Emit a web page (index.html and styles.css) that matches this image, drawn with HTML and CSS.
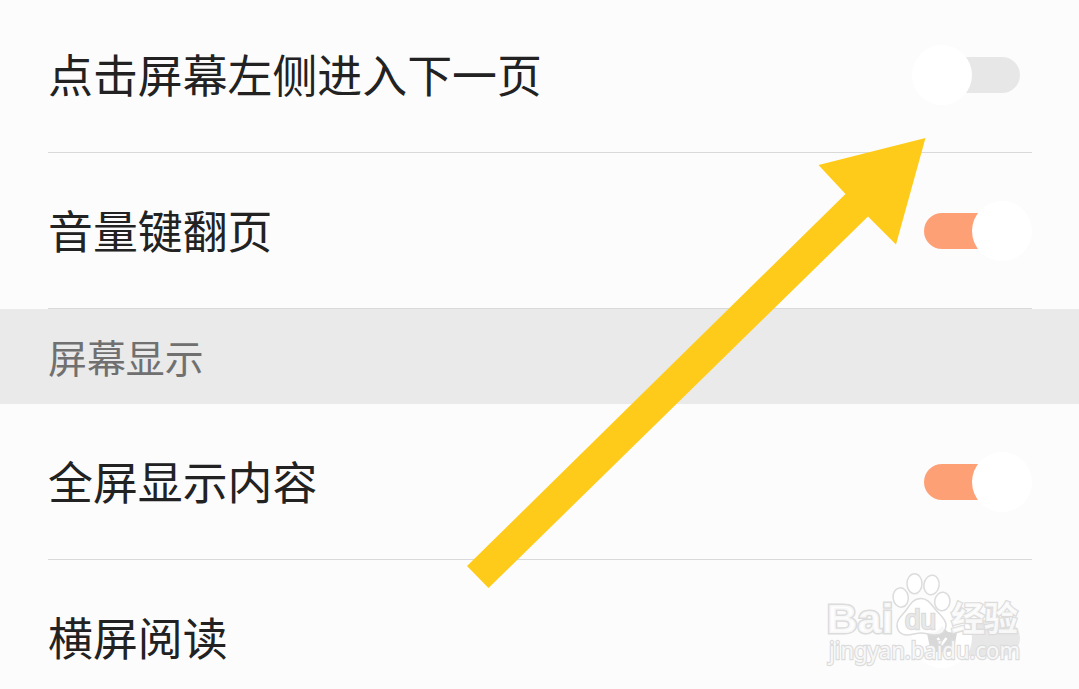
FILE: index.html
```
<!DOCTYPE html>
<html lang="zh-CN">
<head>
<meta charset="utf-8">
<title>阅读设置</title>
<link rel="stylesheet" href="styles.css">
</head>
<body>
<main class="settings">
  <div class="row row-first"><span class="label">点击屏幕左侧进入下一页</span><span class="switch"><i class="knob"></i></span></div>
  <div class="row"><span class="label">音量键翻页</span><span class="switch on"><i class="knob"></i></span></div>
  <h2 class="section">屏幕显示</h2>
  <div class="row"><span class="label">全屏显示内容</span><span class="switch on"><i class="knob"></i></span></div>
  <div class="row"><span class="label">横屏阅读</span><span class="switch"><i class="knob"></i></span></div>
</main>
<svg class="overlay" viewBox="0 0 1079 689">
  <polygon class="arrow" points="467,566 845.5,194 818.5,165 925.5,138 896,244.5 868,216.5 488.5,588"/>
  <g class="shield">
    <path class="shield-body" d="M927 633 L936 632 L942 626 L948 632 L957 633 L954 648 Q952 652 947 652 L937 652 Q932 652 930 648 Z"/>
    <path class="shield-check" d="M937.500 638 L942 644 L946.500 638"/>
  </g>
  <g class="mark">
    <ellipse cx="900.7" cy="597.5" rx="7.6" ry="9.7" transform="rotate(-8 900.7 597.5)"/>
    <ellipse cx="914.5" cy="583.7" rx="7.5" ry="10"/>
    <ellipse cx="931.5" cy="585" rx="7.6" ry="9.8" transform="rotate(10 931.5 585)"/>
    <ellipse cx="942.3" cy="601.5" rx="7.6" ry="9.3" transform="rotate(8 942.3 601.5)"/>
    <path d="M921 598.500 C928 598.500 931 604 935 609 C940 615 946 619 946 625 C946 631 942 635 935 635 C930 635 926 633 921 633 C916 633 912 635 907 635 C901 635 897 631 897 625 C897 618 903 615 907 609 C911 603 914 598.500 921 598.500 Z"/>
    <text class="brand" x="826.500" y="633" textLength="67" lengthAdjust="spacingAndGlyphs">Bai</text>
    <text class="du" x="905" y="628.500" textLength="31" lengthAdjust="spacingAndGlyphs">du</text>
    <text class="brand-cn" x="951" y="631" textLength="67">经验</text>
    <text class="domain" x="829" y="659" textLength="191" lengthAdjust="spacingAndGlyphs">jingyan.baidu.com</text>
  </g>
</svg>
</body>
</html>
```
FILE: styles.css
```
body {
  margin: 0;
  background: #fcfcfc;
  font-family: "Noto Sans CJK SC", sans-serif;
  color: #222;
}
.settings {
  height: 689px;
  overflow: hidden;
}
.row {
  display: flex;
  align-items: center;
  justify-content: space-between;
  box-sizing: border-box;
  height: 156px;
  margin: 0 47px 0 48px;
  border-bottom: 1px solid #d9d9d9;
}
.row-first { margin-top: -3px; }
.label {
  padding-bottom: 2px;
  font-size: 44.9px;
  line-height: 60px;
}
.section {
  margin: 0;
  height: 95px;
  padding-left: 48px;
  background: #eaeaea;
  color: #707070;
  font-size: 38.9px;
  font-weight: 400;
  line-height: 95px;
}
.switch {
  display: flex;
  align-items: center;
  box-sizing: border-box;
  width: 96px;
  height: 36px;
  margin-right: 12px;
  border-radius: 18px;
  background: #e7e7e7;
}
.switch.on {
  justify-content: flex-end;
  background: #fea076;
}
.knob {
  flex: none;
  width: 60px;
  height: 60px;
  margin: 0 -12px;
  border-radius: 50%;
  background: #fff;
}
.overlay {
  position: absolute;
  left: 0;
  top: 0;
  width: 1079px;
  height: 689px;
}
.arrow { fill: #ffcb1a; }
.shield-body { fill: #d8d8d8; }
.shield-check {
  fill: none;
  stroke: #fff;
  stroke-width: 2.5;
}
.mark {
  fill: #fff;
  fill-opacity: .8;
  stroke: #dcdcdc;
  stroke-width: 1.5;
}
.mark text {
  paint-order: stroke;
  stroke-width: 2.4;
}
.mark .brand {
  font: 700 41px "Liberation Sans", sans-serif;
  stroke-width: 3;
}
.mark .du {
  font: 400 27px "Liberation Sans", sans-serif;
  fill: #ececec;
  stroke-width: 2.4;
}
.brand-cn {
  font: 700 34px "Noto Sans CJK SC", sans-serif;
}
.domain {
  font: 400 23px "Noto Sans", sans-serif;
}
```
